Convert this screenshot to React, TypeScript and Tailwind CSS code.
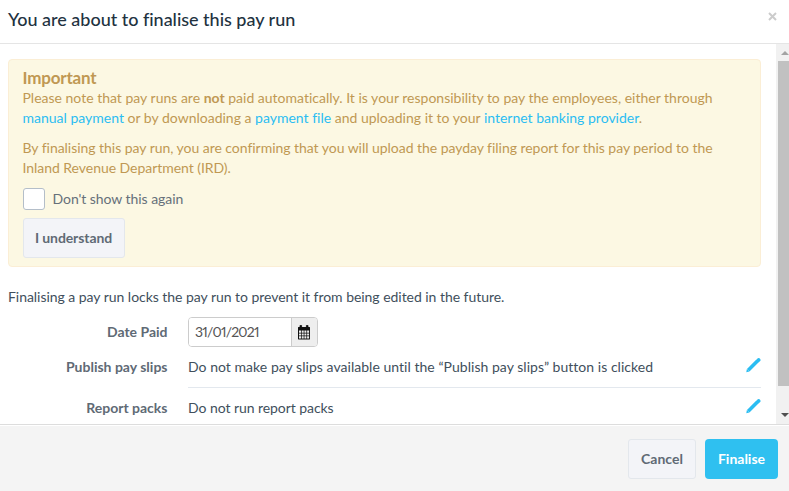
import { useState } from 'react';

interface SettingRow {
  label: string;
  value: string;
  tracking: string;
}

const settings: SettingRow[] = [
  {
    label: 'Publish pay slips',
    value: 'Do not make pay slips available until the “Publish pay slips” button is clicked',
    tracking: 'tracking-[0.035px]',
  },
  {
    label: 'Report packs',
    value: 'Do not run report packs',
    tracking: 'tracking-[-0.06px]',
  },
];

function CalendarIcon() {
  return (
    <svg width="14" height="15" viewBox="0 0 14 15" fill="#111">
      <path d="M3 .4h1.600v2H3zM9.400 .4H11v2H9.400z" stroke="#111" strokeWidth=".8" />
      <path d="M1.500 2h11c.300 0 .500.200.500.500V14c0 .300-.2.500-.5.500h-11c-.3 0-.5-.2-.5-.5V2.500c0-.3.2-.5.500-.5z" />
      <path
        fill="#eee"
        d="M2 5.500h2v2.200H2zM4.700 5.500h2v2.200h-2zM7.400 5.500h2v2.200h-2zM10.100 5.500h2v2.200h-2zM2 8.400h2v2.200H2zM4.700 8.400h2v2.200h-2zM7.400 8.400h2v2.200h-2zM10.100 8.400h2v2.200h-2zM2 11.300h2v2.200H2zM4.700 11.300h2v2.200h-2zM7.400 11.300h2v2.200h-2zM10.100 11.300h2v2.200h-2z"
      />
    </svg>
  );
}

function PencilIcon() {
  return (
    <svg className="mt-px" width="15" height="15" viewBox="0 0 15 15" fill="none" stroke="#2bbdf2" strokeWidth="3.6">
      <path d="M2.200 12.300L10.900 3.600" />
      <path d="M11.300 3.200L12.700 1.900" strokeLinecap="round" />
      <path d="M.3 14.200L.9 11.100L3.400 13.600z" fill="#2bbdf2" stroke="none" />
    </svg>
  );
}

export default function App() {
  const [checked, setChecked] = useState(false);
  const [datePaid, setDatePaid] = useState('31/01/2021');

  return (
    <div className="flex h-[491px] w-[789px] flex-col overflow-hidden bg-white font-[Lato,sans-serif] text-[14px] leading-5 text-[#414f5c] [font-variant-ligatures:none]">
      <header className="flex h-11 shrink-0 items-start justify-between border-b border-[#e5e5e5] pt-[7px] pr-3 pl-2">
        <h3 className="text-[18px] leading-6 font-medium tracking-[-0.02px] text-[#22323f]">
          You are about to finalise this pay run
        </h3>
        <button className="pt-[5px]" aria-label="Close">
          <svg width="9" height="9" viewBox="0 0 9 9" stroke="#ccc" strokeWidth="2">
            <path d="M1 1l7 7M8 1l-7 7" />
          </svg>
        </button>
      </header>

      <div className="flex h-[380px] shrink-0">
        <div className="w-[776px] overflow-hidden pt-[15px] pr-[15px] pl-2">
          <section className="h-[208px] rounded border border-[#fbeed5] bg-[#fcf8e3] pt-2 pl-[13.5px] text-[#c09853]">
            <h4 className="text-[17px] leading-5 font-bold tracking-[-0.2px]">Important</h4>
            <p className="mb-2.5 whitespace-nowrap">
              Please note that pay runs are <b>not</b> paid automatically. It is your responsibility to pay the employees, either through
              <br />
              <a className="text-[#2bbdf2]">manual payment</a> or by downloading a{' '}
              <a className="text-[#2bbdf2]">payment file</a> and uploading it to your{' '}
              <a className="text-[#2bbdf2]">internet banking provider</a>.
            </p>
            <p className="mb-2.5 tracking-[-0.04px] whitespace-nowrap">
              By finalising this pay run, you are confirming that you will upload the payday filing report for this pay period to the
              <br />
              Inland Revenue Department (IRD).
            </p>
            <label className="flex h-[22px] items-center gap-2 text-[#66707a]">
              <input
                type="checkbox"
                checked={checked}
                onChange={(e) => setChecked(e.target.checked)}
                className="size-[22px] appearance-none rounded-[3px] border border-[#b4bec9] bg-white"
              />
              <span className="tracking-[-0.05px]">Don't show this again</span>
            </label>
            <button className="mt-2 h-10 w-[102px] rounded-[3px] border border-[#e3e7ec] bg-[#f3f4f8] font-bold tracking-[-0.1px] text-[#606a75]">
              I understand
            </button>
          </section>

          <p className="mt-5 tracking-[-0.04px] whitespace-nowrap">
            Finalising a pay run locks the pay run to prevent it from being edited in the future.
          </p>

          <div className="mt-2.5 flex h-[30px] items-center">
            <label className="w-[159.5px] text-right font-bold text-[#606a75]">Date Paid</label>
            <div className="ml-[20.5px] flex h-[30px] w-[130px] overflow-hidden rounded border border-[#ccc]">
              <input
                value={datePaid}
                onChange={(e) => setDatePaid(e.target.value)}
                className="w-[102px] bg-white pl-1.5 tracking-[-0.8px] text-[#555] [font-feature-settings:'pnum']"
              />
              <button className="flex flex-1 items-center justify-center border-l border-[#ccc] bg-[#eee] pr-0.5">
                <CalendarIcon />
              </button>
            </div>
          </div>

          {settings.map((row) => (
            <div key={row.label} className="flex h-[41px] pt-2.5">
              <label className="w-[159.5px] text-right font-bold text-[#606a75]">{row.label}</label>
              <div className="ml-[20.5px] flex flex-1 items-start justify-between border-b border-[#e3e8ee] whitespace-nowrap">
                <span className={row.tracking}>{row.value}</span>
                <PencilIcon />
              </div>
            </div>
          ))}
        </div>

        <div className="flex flex-1 flex-col bg-[#f1f1f1]">
          <div className="flex h-[17px] items-center justify-center pl-1">
            <svg width="8" height="4" viewBox="0 0 8 4" fill="#a3a3a3">
              <path d="M4 0l4 4H0z" />
            </svg>
          </div>
          <div className="ml-0.5 h-[325px] bg-[#c1c1c1]" />
          <div className="flex flex-1 items-center justify-center pt-5 pl-1">
            <svg width="8" height="4" viewBox="0 0 8 4" fill="#505050">
              <path d="M4 4l4-4H0z" />
            </svg>
          </div>
        </div>
      </div>

      <footer className="flex flex-1 items-start justify-end gap-[9px] border-t border-[#ddd] bg-[#f4f4f4] pt-3.5 pr-[11px] font-bold shadow-[inset_0_1px_0_#fff]">
        <button className="h-10 w-[68px] rounded-[3px] border border-[#e3e7ec] bg-[#f3f4f8] text-[#606a75]">
          Cancel
        </button>
        <button className="h-10 w-[73px] rounded bg-[#2fc0f0] text-white">Finalise</button>
      </footer>
    </div>
  );
}
